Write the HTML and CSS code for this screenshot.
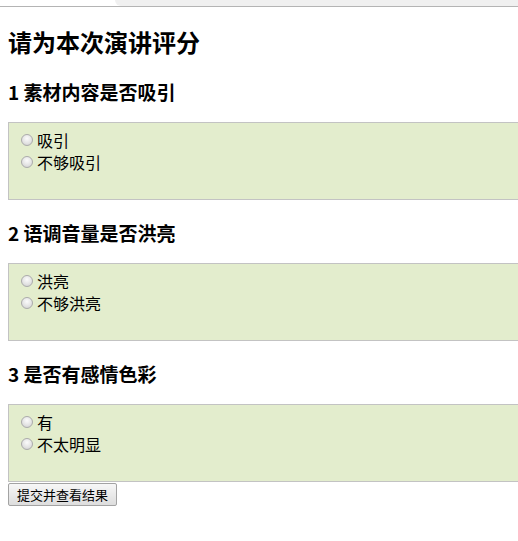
FILE: index.html
```html
<!DOCTYPE html>
<html lang="zh-CN">
<head>
<meta charset="utf-8">
<title>请为本次演讲评分</title>
<link rel="stylesheet" href="styles.css">
</head>
<body>
<div class="topbar"><div class="gap"></div><div class="tab"></div></div>
<form class="page">
  <h2 class="title">请为本次演讲评分</h2>
  <h3 class="q">1 素材内容是否吸引</h3>
  <div class="opts">
    <label class="opt"><input type="radio" name="q1"><span>吸引</span></label>
    <label class="opt"><input type="radio" name="q1"><span>不够吸引</span></label>
  </div>
  <h3 class="q">2 语调音量是否洪亮</h3>
  <div class="opts">
    <label class="opt"><input type="radio" name="q2"><span>洪亮</span></label>
    <label class="opt"><input type="radio" name="q2"><span>不够洪亮</span></label>
  </div>
  <h3 class="q">3 是否有感情色彩</h3>
  <div class="opts">
    <label class="opt"><input type="radio" name="q3"><span>有</span></label>
    <label class="opt"><input type="radio" name="q3"><span>不太明显</span></label>
  </div>
  <button type="button" class="submit">提交并查看结果</button>
</form>
</body>
</html>
```
FILE: styles.css
```css
html, body {
  margin: 0;
  padding: 0;
  background: #fff;
  overflow: hidden;
}
body {
  font-family: "Noto Sans CJK SC", "Noto Sans", sans-serif;
  color: #000;
}
.topbar {
  display: flex;
  height: 6px;
  border-bottom: 1px solid #b4b4b4;
}
.gap {
  width: 115px;
}
.tab {
  flex: 1;
  background: #f0f0f0;
  border-bottom-left-radius: 8px;
}
.page {
  display: flex;
  flex-direction: column;
  align-items: stretch;
  padding-left: 8px;
  overflow: hidden;
}
.title {
  font-size: 24px;
  line-height: 28px;
  font-weight: bold;
  margin: 21px 0 3px;
}
.q {
  font-size: 19px;
  line-height: 24px;
  font-weight: bold;
  margin: 21px 0 18px;
}
.opts {
  box-sizing: border-box;
  height: 78px;
  margin-right: -40px;
  border: 1px solid #c3c3c3;
  background: #e3edcd;
  padding: 6px 0 0 12px;
  display: flex;
  flex-direction: column;
}
.opt {
  display: flex;
  align-items: center;
  gap: 4px;
  height: 22px;
  font-size: 16px;
  line-height: 22px;
}
.opt input {
  appearance: none;
  -webkit-appearance: none;
  box-sizing: border-box;
  width: 12px;
  height: 12px;
  margin: 0;
  border-radius: 50%;
  border: 1px solid #ababab;
  background: radial-gradient(circle at 50% 35%, #fbfbfb 0%, #e4e4e4 55%, #cdcdcd 100%);
}
.submit {
  align-self: flex-start;
  box-sizing: border-box;
  height: 23px;
  margin: 1px 0 0;
  padding: 0 8px;
  font-family: "Noto Sans CJK SC", sans-serif;
  font-size: 13px;
  line-height: 21px;
  color: #000;
  border: 1px solid #a3a3a3;
  border-radius: 2px;
  background: linear-gradient(#f7f7f7, #dddddd);
}
```
